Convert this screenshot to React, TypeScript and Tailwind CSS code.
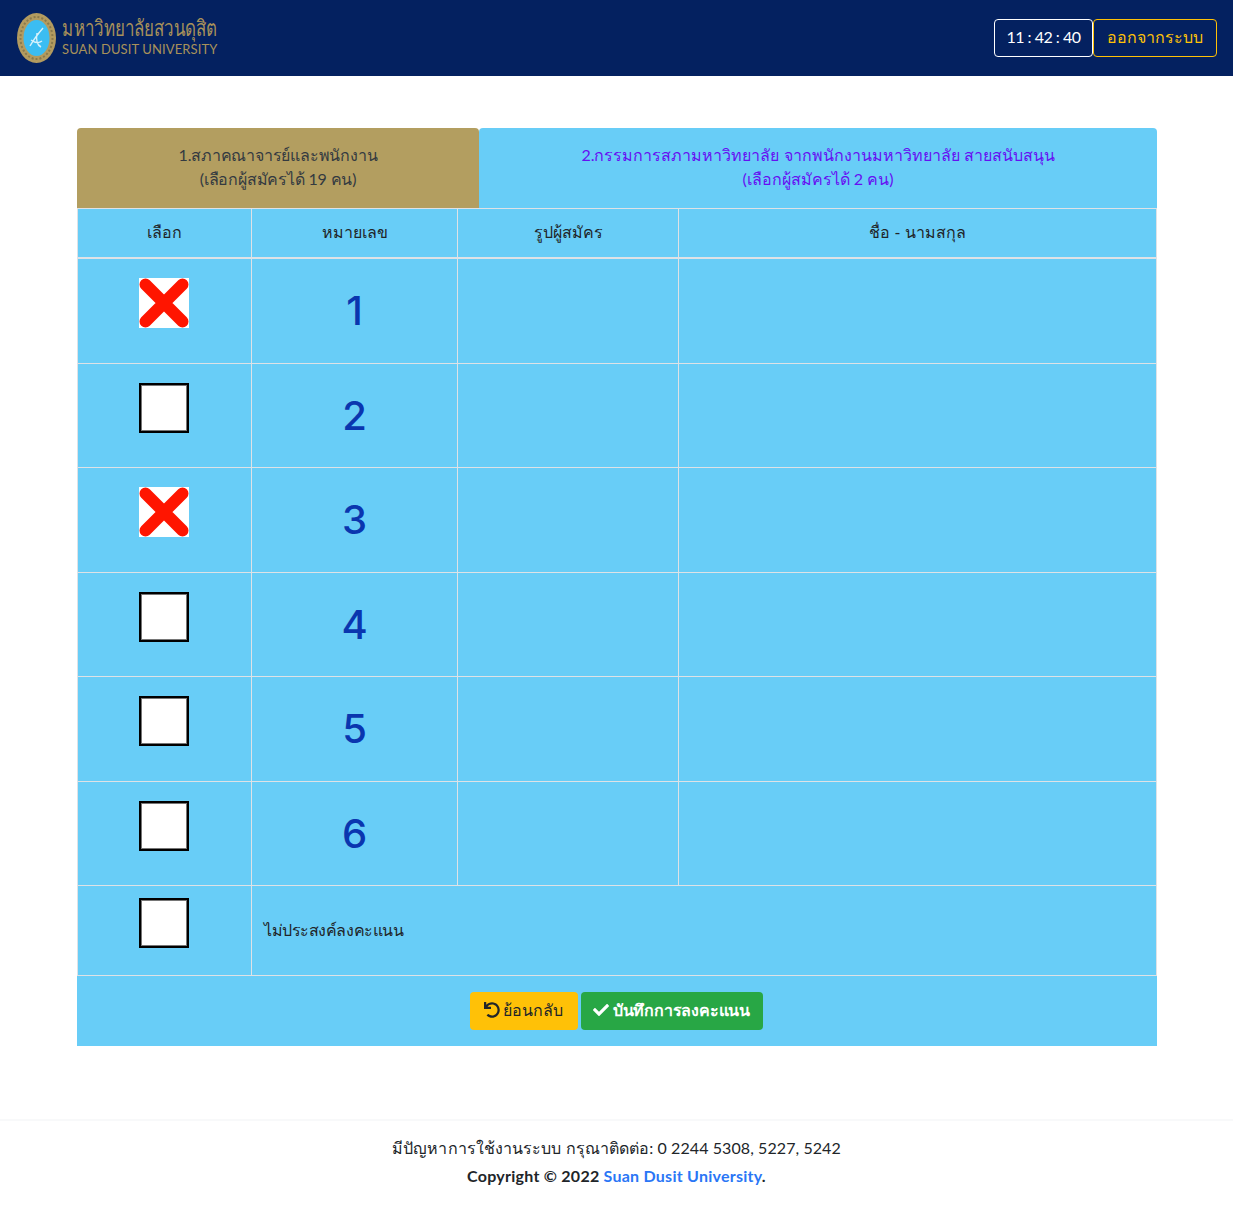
import { FaCheck, FaUndo } from "react-icons/fa";

const candidates = [
  { no: 1, checked: true },
  { no: 2, checked: false },
  { no: 3, checked: true },
  { no: 4, checked: false },
  { no: 5, checked: false },
  { no: 6, checked: false },
];

const rowHeights = ["h-[106px]", "h-[104px]", "h-[105px]", "h-[104px]", "h-[105px]", "h-[104px]"];

function VoteBox({ checked }: { checked: boolean }) {
  if (checked) {
    return (
      <svg width="50" height="50" viewBox="0 0 50 50" className="block bg-white">
        <path d="M6.5 6.5 L43.5 43.5 M43.5 6.5 L6.5 43.5" stroke="#ff1500" strokeWidth="12" strokeLinecap="round" />
      </svg>
    );
  }
  return <div className="w-[50px] h-[50px] bg-white border-2 border-black shadow-[inset_0_0_0_1px_#767676]" />;
}

function Logo() {
  return (
    <div className="flex items-center gap-[6px]">
      <svg width="39" height="50" viewBox="0 0 39 50" className="block">
        <ellipse cx="19.5" cy="25" rx="19.5" ry="25" fill="#b39b5f" />
        <ellipse cx="19.5" cy="25" rx="16" ry="21" fill="none" stroke="#8a7a4c" strokeWidth="2" strokeDasharray="2 2" />
        <ellipse cx="19.5" cy="25" rx="13" ry="18" fill="#3bbdf2" />
        <path d="M13 33 C17 26 20 22 26 15 M14 27 C18 30 21 31 25 28 M20 20 C19 26 20 32 24 34" fill="none" stroke="#d8f2fb" strokeWidth="1.4" />
      </svg>
      <div className="flex flex-col leading-none text-[#a8915a] -mt-[6px]">
        <span className="text-[22px] leading-[27px] whitespace-nowrap origin-left scale-x-[0.77]">มหาวิทยาลัยสวนดุสิต</span>
        <span className="text-[13px] leading-[15px] mt-px tracking-[0.1px] whitespace-nowrap">SUAN DUSIT UNIVERSITY</span>
      </div>
    </div>
  );
}

export default function App() {
  return (
    <div className="min-h-[1205px] bg-white flex flex-col text-[#212529] font-['Lato','Inter',sans-serif] text-[16px]">
      {/* Header */}
      <header className="h-[76px] bg-[#042160] flex items-center justify-between pl-[17px] pr-[16px]">
        <Logo />
        <div className="flex items-center">
          <div className="h-[38px] w-[99px] flex items-center justify-center pb-[2px] border border-white rounded text-white text-[16px] tracking-[-0.5px] whitespace-nowrap">
            11 : 42 : 40
          </div>
          <button className="h-[38px] w-[124px] flex items-center justify-center pb-[2px] border border-[#ffc107] rounded text-[#ffc107] text-[16px] whitespace-nowrap">
            ออกจากระบบ
          </button>
        </div>
      </header>

      <main className="pt-[52px] px-[77px] pr-[76px]">
        {/* Tabs */}
        <div className="flex h-[80px]">
          <div className="w-[402px] bg-[#b39e60] rounded-t flex flex-col items-center justify-center pb-[2px] text-[16px] leading-6 text-[#343a40] text-center tracking-[-0.2px]">
            <span>1.สภาคณาจารย์และพนักงาน</span>
            <span>(เลือกผู้สมัครได้ 19 คน)</span>
          </div>
          <div className="flex-1 bg-[#68cdf7] rounded-t flex flex-col items-center justify-center pb-[2px] text-[16px] leading-6 text-[#6610f2] text-center">
            <span>2.กรรมการสภามหาวิทยาลัย จากพนักงานมหาวิทยาลัย สายสนับสนุน</span>
            <span>(เลือกผู้สมัครได้ 2 คน)</span>
          </div>
        </div>

        {/* Ballot table */}
        <table className="w-full table-fixed border-collapse bg-[#68cdf7] border border-[#dee2e6]">
          <colgroup>
            <col className="w-[174px]" />
            <col className="w-[206px]" />
            <col className="w-[221px]" />
            <col />
          </colgroup>
          <thead>
            <tr className="h-[49px] border-b-2 border-[#dee2e6]">
              <th className="border-x border-[#dee2e6] font-medium pb-[2px]">เลือก</th>
              <th className="border-x border-[#dee2e6] font-medium pb-[2px]">หมายเลข</th>
              <th className="border-x border-[#dee2e6] font-medium pb-[2px]">รูปผู้สมัคร</th>
              <th className="border-x border-[#dee2e6] font-medium pb-[2px]">ชื่อ - นามสกุล</th>
            </tr>
          </thead>
          <tbody>
            {candidates.map((c, i) => (
              <tr key={c.no} className={`${rowHeights[i]} border-b border-[#dee2e6]`}>
                <td className="border-x border-[#dee2e6] align-top pt-[19px]">
                  <div className="flex justify-center pr-[2px]">
                    <VoteBox checked={c.checked} />
                  </div>
                </td>
                <td className="border-x border-[#dee2e6] text-center text-[40px] font-['Inter',sans-serif] font-medium text-[#0a36af]">{c.no}</td>
                <td className="border-x border-[#dee2e6]" />
                <td className="border-x border-[#dee2e6]" />
              </tr>
            ))}
            <tr className="h-[90px] border-b border-[#dee2e6]">
              <td className="border-x border-[#dee2e6] align-top pt-[12px]">
                <div className="flex justify-center pr-[2px]">
                  <VoteBox checked={false} />
                </div>
              </td>
              <td colSpan={3} className="border-x border-[#dee2e6] px-3 pb-[2px] tracking-[-0.45px]">
                ไม่ประสงค์ลงคะแนน
              </td>
            </tr>
          </tbody>
        </table>

        {/* Actions */}
        <div className="h-[70px] bg-[#68cdf7] flex items-center justify-center gap-[3px] pr-[2px]">
          <button className="h-[38px] w-[108px] bg-[#ffc107] rounded flex items-center justify-center pb-[2px] gap-[3px] text-[#212529]">
            <FaUndo size={16} />
            ย้อนกลับ
          </button>
          <button className="h-[38px] w-[182px] bg-[#28a745] rounded flex items-center justify-center pb-[2px] gap-1 text-white font-bold tracking-[-0.2px]">
            <FaCheck size={16} />
            บันทึกการลงคะแนน
          </button>
        </div>
      </main>

      {/* Footer */}
      <footer className="mt-[73px] h-[86px] border-t-2 border-[#f8f9fa] flex flex-col items-center pt-[15px] text-[16px]">
        <p className="leading-6 tracking-[0.08px]">มีปัญหาการใช้งานระบบ กรุณาติดต่อ: 0 2244 5308, 5227, 5242</p>
        <p className="leading-6 mt-1 font-bold tracking-[0.25px]">
          Copyright © 2022 <span className="text-[#2a76f6]">Suan Dusit University</span>.
        </p>
      </footer>
    </div>
  );
}
